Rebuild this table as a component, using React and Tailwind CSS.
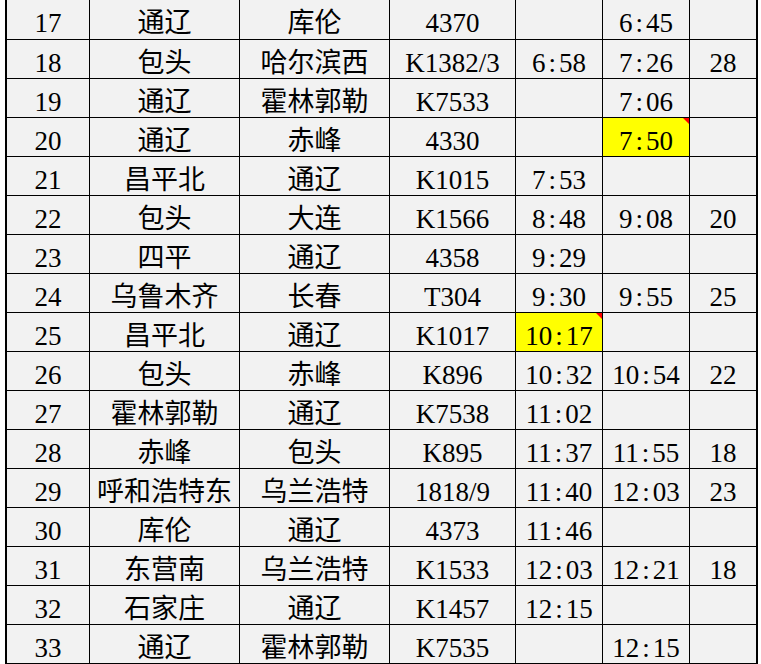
import React from "react";

const rows = [
  ["17", "通辽", "库伦", "4370", "", "6:45", ""],
  ["18", "包头", "哈尔滨西", "K1382/3", "6:58", "7:26", "28"],
  ["19", "通辽", "霍林郭勒", "K7533", "", "7:06", ""],
  ["20", "通辽", "赤峰", "4330", "", "7:50", ""],
  ["21", "昌平北", "通辽", "K1015", "7:53", "", ""],
  ["22", "包头", "大连", "K1566", "8:48", "9:08", "20"],
  ["23", "四平", "通辽", "4358", "9:29", "", ""],
  ["24", "乌鲁木齐", "长春", "T304", "9:30", "9:55", "25"],
  ["25", "昌平北", "通辽", "K1017", "10:17", "", ""],
  ["26", "包头", "赤峰", "K896", "10:32", "10:54", "22"],
  ["27", "霍林郭勒", "通辽", "K7538", "11:02", "", ""],
  ["28", "赤峰", "包头", "K895", "11:37", "11:55", "18"],
  ["29", "呼和浩特东", "乌兰浩特", "1818/9", "11:40", "12:03", "23"],
  ["30", "库伦", "通辽", "4373", "11:46", "", ""],
  ["31", "东营南", "乌兰浩特", "K1533", "12:03", "12:21", "18"],
  ["32", "石家庄", "通辽", "K1457", "12:15", "", ""],
  ["33", "通辽", "霍林郭勒", "K7535", "", "12:15", ""],
];

const highlighted = {
  "3-5": true,
  "8-4": true,
};

function Time({ value }) {
  const [h, m] = value.split(":");
  return (
    <span>
      {h}
      <span className="inline-block w-[0.5em] text-center">:</span>
      {m}
    </span>
  );
}

export default function App() {
  return (
    <div className="min-h-[664px] w-[761px] overflow-hidden bg-white">
      <div className="ml-[5px] w-[753px] border-x-2 border-b-2 border-black bg-black">
        <div className="grid grid-cols-[82px_149px_149px_125px_86px_86px_66px] grid-rows-[39px_repeat(16,38px)] gap-px font-['Liberation_Serif','Noto_Sans_CJK_SC',serif] text-[27px] leading-[30px] text-black">
          {rows.map((row, r) =>
            row.map((cell, c) => {
              const hl = highlighted[`${r}-${c}`];
              return (
                <div
                  key={`${r}-${c}`}
                  className={
                    hl
                      ? "relative overflow-hidden whitespace-nowrap bg-[#ffff00] pt-[8px] text-center"
                      : "relative overflow-hidden whitespace-nowrap bg-[#f2f2f2] pt-[8px] text-center"
                  }
                >
                  {c >= 4 && c <= 5 && cell.includes(":") ? <Time value={cell} /> : cell}
                  {hl && (
                    <svg
                      className="absolute right-0 top-0"
                      width="6"
                      height="6"
                      viewBox="0 0 6 6"
                    >
                      <polygon points="0,0 6,0 6,6" fill="#ff0000" />
                    </svg>
                  )}
                </div>
              );
            })
          )}
        </div>
      </div>
    </div>
  );
}
